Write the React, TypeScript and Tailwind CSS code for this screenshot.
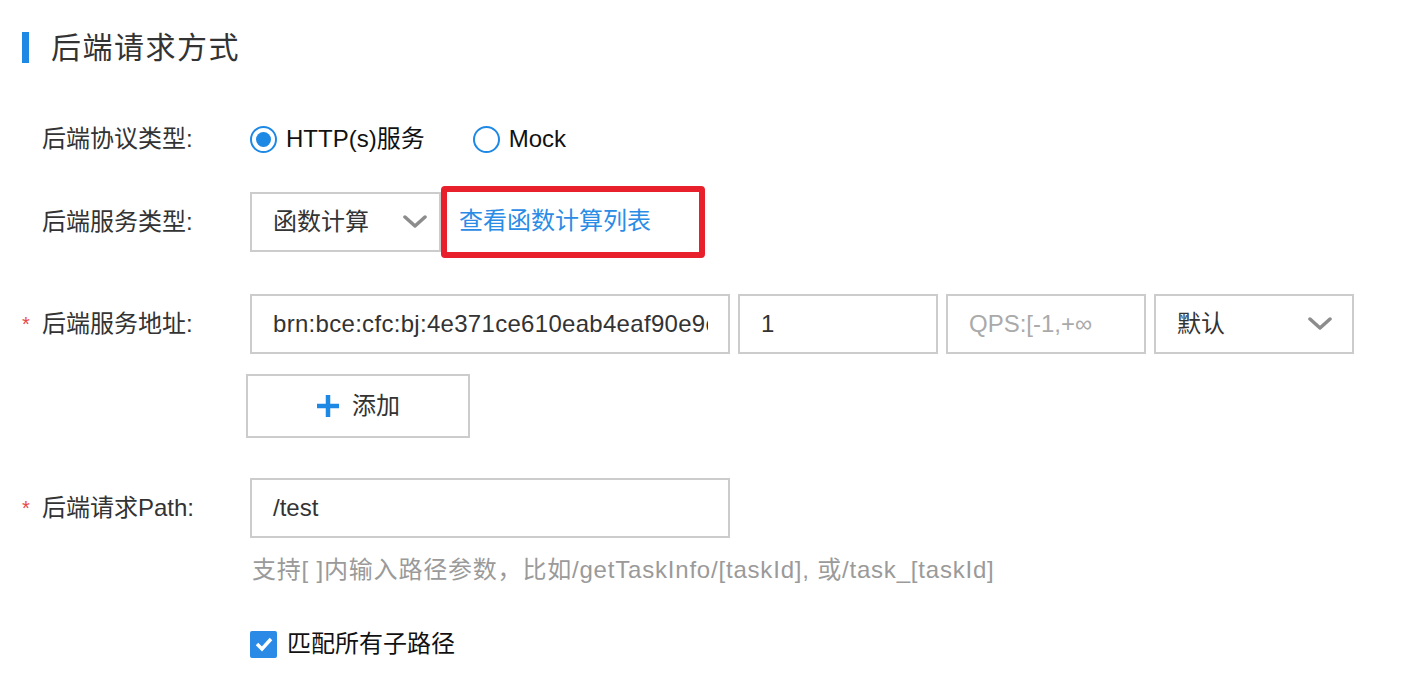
import React from "react";

const font = { fontFamily: '"Liberation Sans", "Noto Sans CJK SC", sans-serif' };

function Chevron() {
    return (
        <svg width="24" height="14" viewBox="0 0 24 14" className="shrink-0">
            <polyline points="2,2 12,11 22,2" fill="none" stroke="#8c8c8c" strokeWidth="3.5" strokeLinecap="round" strokeLinejoin="round" />
        </svg>
    );
}

function Label({ text, required }: { text: string; required?: boolean }) {
    return (
        <div className="w-[228px] shrink-0 flex items-center text-[24px] text-[#333]">
            <span className="w-[20px] text-[#e8484b] text-[20px]">{required ? "*" : ""}</span>
            <span>{text}</span>
        </div>
    );
}

export default function App() {
    return (
        <div className="w-[1414px] h-[684px] bg-white pl-[22px] pt-[32px] overflow-hidden" style={font}>
            {/* heading */}
            <div className="flex items-center h-[31px]">
                <div className="w-[7px] h-[31px] bg-[#1e88e5]" />
                <h2 className="ml-[22px] text-[30px] leading-none text-[#333] tracking-[1.5px]">后端请求方式</h2>
            </div>

            {/* protocol */}
            <div className="flex items-center h-[40px] mt-[56px]">
                <Label text="后端协议类型:" />
                <label className="flex items-center">
                    <span className="w-[27px] h-[27px] rounded-full border-2 border-[#1e88e5] flex items-center justify-center">
                        <span className="w-[15px] h-[15px] rounded-full bg-[#1e88e5]" />
                    </span>
                    <span className="ml-[9px] text-[24px] text-[#111]">HTTP(s)服务</span>
                </label>
                <label className="flex items-center ml-[48px]">
                    <span className="w-[27px] h-[27px] rounded-full border-2 border-[#1e88e5]" />
                    <span className="ml-[9px] text-[24px] text-[#111]">Mock</span>
                </label>
            </div>

            {/* service type */}
            <div className="flex items-center h-[72px] mt-[27px]">
                <Label text="后端服务类型:" />
                <div className="w-[191px] h-[60px] border-2 border-[#cccccc] flex items-center justify-between pl-[21px] pr-[12px] text-[24px] text-[#333]">
                    <span>函数计算</span>
                    <Chevron />
                </div>
                <div className="w-[264px] h-[72px] border-[6px] border-[#e8202c] rounded-[4px] flex items-center pl-[12px] pb-[2px]">
                    <a className="text-[24px] text-[#2b8ce6]">查看函数计算列表</a>
                </div>
            </div>

            {/* address */}
            <div className="flex items-center h-[60px] mt-[36px]">
                <Label text="后端服务地址:" required />
                <div className="flex gap-[8px]">
                    <div className="w-[480px] h-[60px] border-2 border-[#cccccc] flex items-center pl-[21px] pr-[20px] text-[24px] text-[#333] overflow-hidden whitespace-nowrap">
                        <span className="overflow-hidden tracking-[0.3px]">brn:bce:cfc:bj:4e371ce610eab4eaf90e9c</span>
                    </div>
                    <div className="w-[200px] h-[60px] border-2 border-[#cccccc] flex items-center pl-[21px] text-[24px] text-[#333]">1</div>
                    <div className="w-[200px] h-[60px] border-2 border-[#cccccc] flex items-center pl-[21px] text-[24px] text-[#aaaaaa] whitespace-nowrap overflow-hidden">QPS:[-1,+∞</div>
                    <div className="w-[200px] h-[60px] border-2 border-[#cccccc] flex items-center justify-between pl-[21px] pr-[20px] text-[24px] text-[#333]">
                        <span>默认</span>
                        <Chevron />
                    </div>
                </div>
            </div>

            {/* add */}
            <div className="ml-[224px] mt-[20px]">
                <button className="w-[224px] h-[64px] border-2 border-[#cccccc] flex items-center justify-center gap-[12px] text-[24px] text-[#333]">
                    <svg width="24" height="24" viewBox="0 0 24 24">
                        <path d="M12 1v22M1 12h22" stroke="#1e88e5" strokeWidth="4.5" />
                    </svg>
                    <span>添加</span>
                </button>
            </div>

            {/* path */}
            <div className="flex items-center h-[60px] mt-[40px]">
                <Label text="后端请求Path:" required />
                <div className="w-[480px] h-[60px] border-2 border-[#cccccc] flex items-center pl-[21px] text-[24px] text-[#333]">/test</div>
            </div>
            <div className="ml-[230px] mt-[14px] text-[24px] tracking-[0.8px] text-[#9a9a9a] whitespace-nowrap">支持[ ]内输入路径参数，比如/getTaskInfo/[taskId], 或/task_[taskId]</div>

            {/* checkbox */}
            <label className="flex items-center ml-[228px] mt-[38px]">
                <span className="w-[27px] h-[27px] rounded-[2px] bg-[#2a8ae6] flex items-center justify-center">
                    <svg width="20" height="20" viewBox="0 0 20 20">
                        <polyline points="3,10 8,15 17,5" fill="none" stroke="white" strokeWidth="3.5" />
                    </svg>
                </span>
                <span className="ml-[10px] text-[24px] text-[#111]">匹配所有子路径</span>
            </label>
        </div>
    );
}
